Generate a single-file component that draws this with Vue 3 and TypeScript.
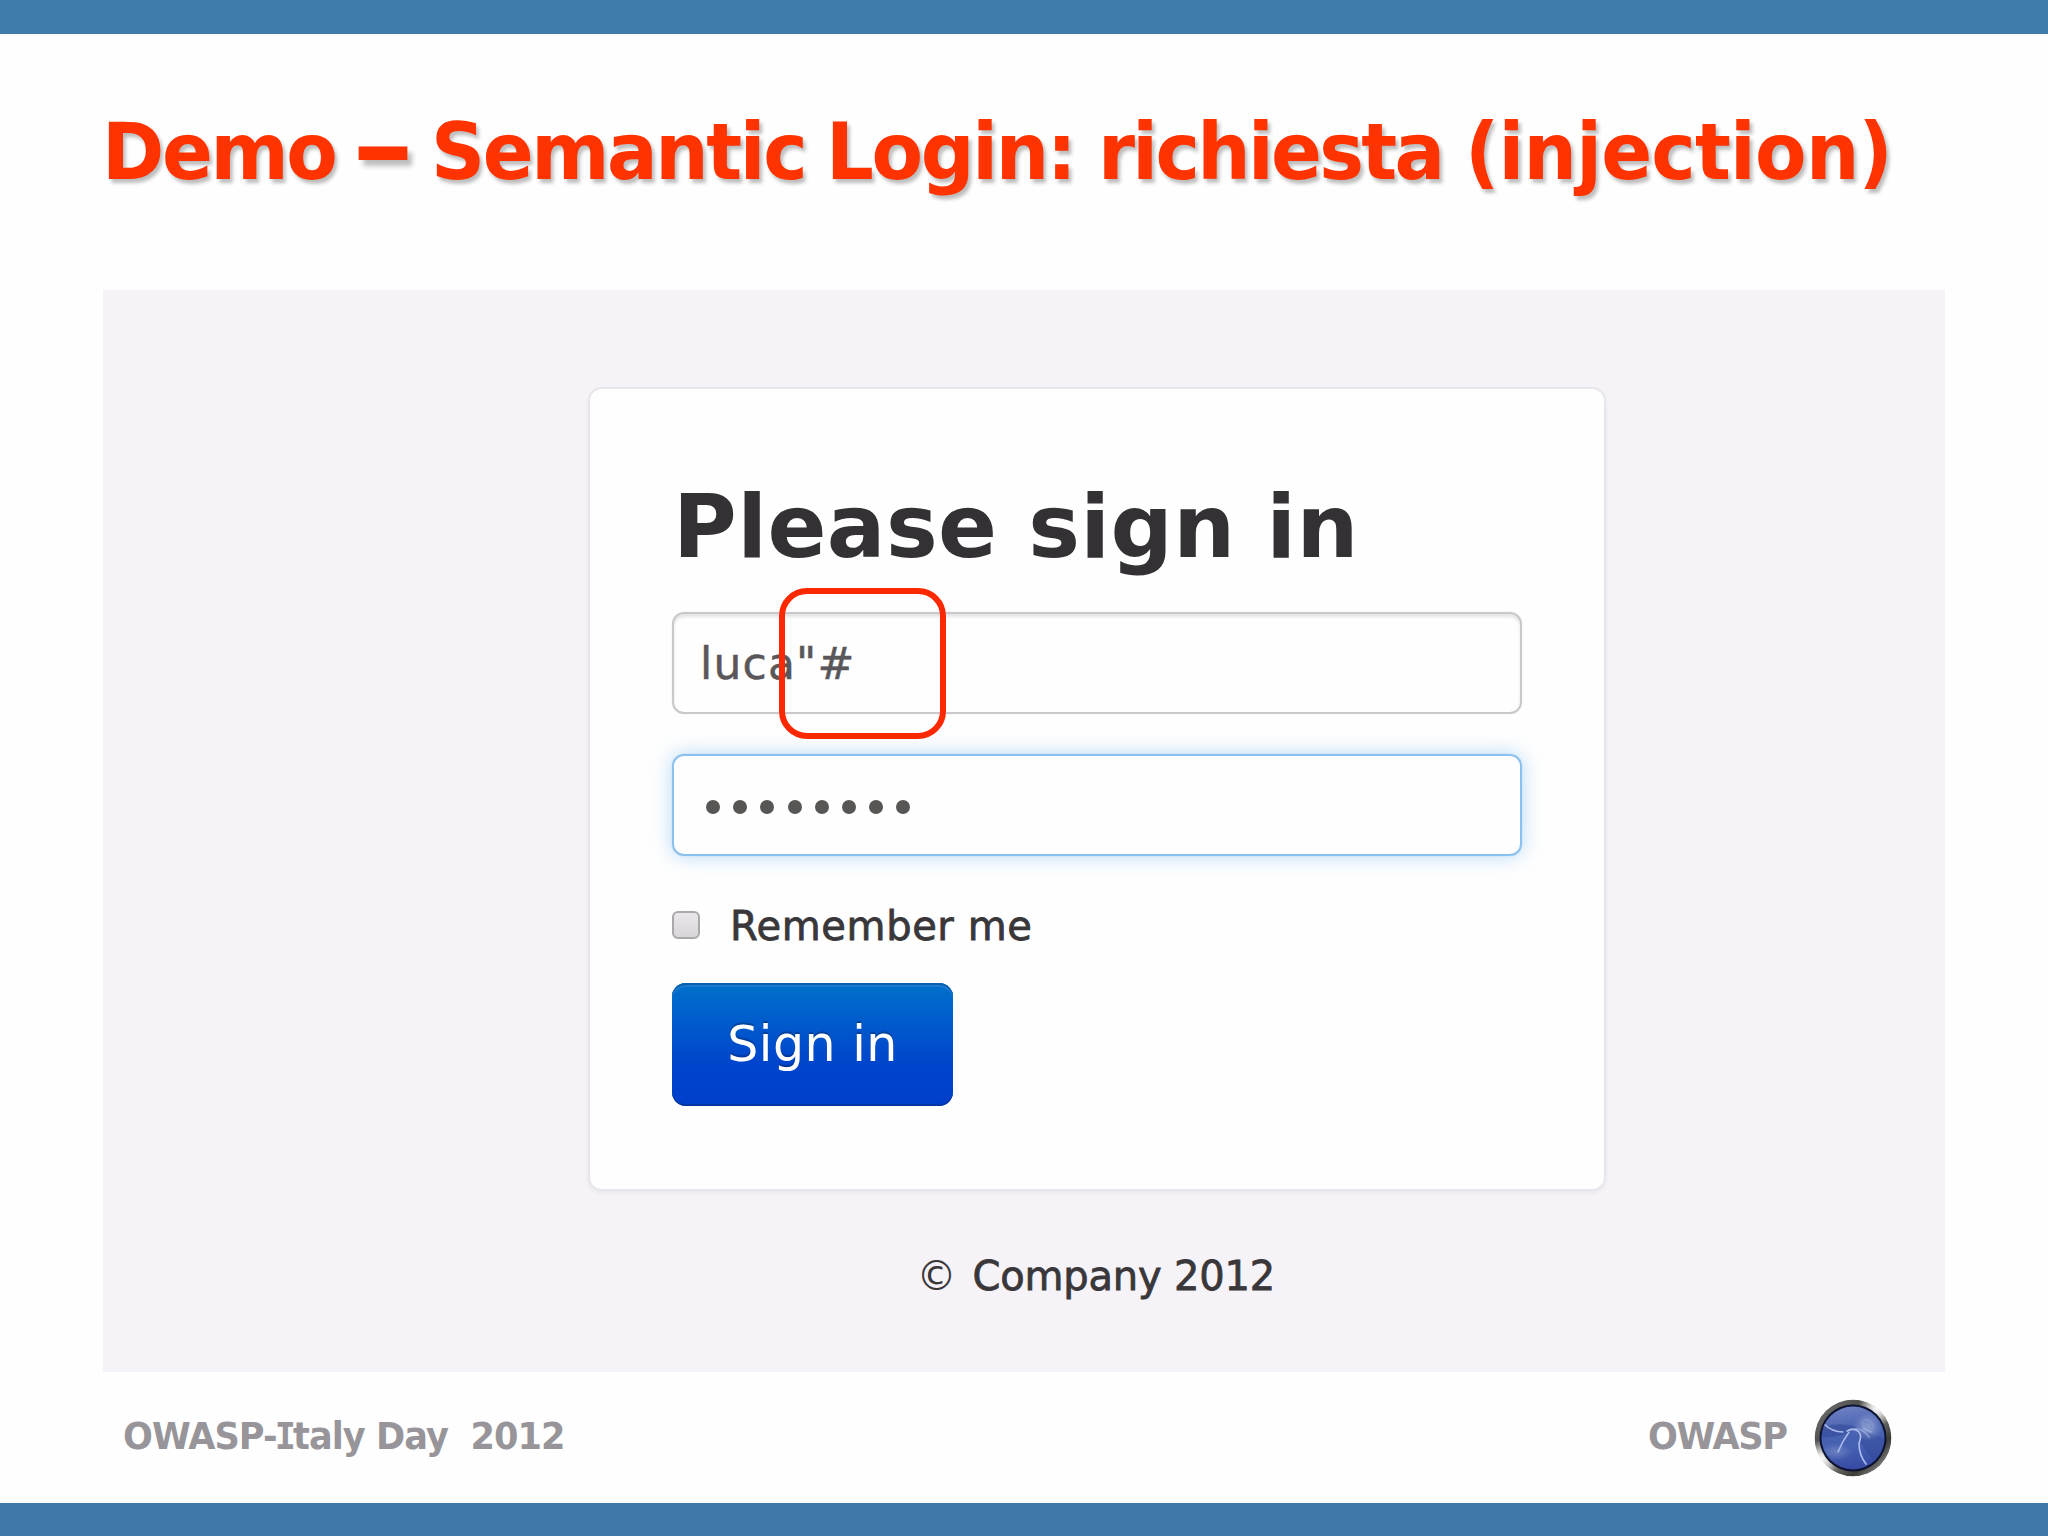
<script setup lang="ts">
import { ref } from 'vue'

interface TitleWord {
  text: string;
  width: number;
  spacing: number;
}

// word advances in px, including the space that follows
const titleWords: TitleWord[] = [
  { text: 'Demo', width: 250, spacing: -2.5 },
  { text: '–', width: 79, spacing: 0 },
  { text: 'Semantic', width: 395, spacing: -2.5 },
  { text: 'Login:', width: 272, spacing: -2.4 },
  { text: 'richiesta', width: 367, spacing: -2.8 },
  { text: '(injection)', width: 440, spacing: -0.8 },
];

const username = ref('luca"#');
const passwordLength = ref(8);
const remember = ref(false);
</script>

<template>
  <div class="slide">
    <header class="slide-header">
      <h1>
        <span
          v-for="word in titleWords"
          :key="word.text"
          :style="{ width: `${word.width}px`, letterSpacing: `${word.spacing}px` }"
        ><span class="word" :class="{ dash: word.text === '–' }">{{ word.text }}</span></span>
      </h1>
    </header>

    <main class="stage">
      <form class="card" @submit.prevent>
        <h2>Please sign in</h2>
        <div class="field">
          <input v-model="username" class="username" type="text" spellcheck="false" />
          <span class="highlight"></span>
        </div>
        <div class="field focused">
          <i v-for="n in passwordLength" :key="n" class="dot"></i>
        </div>
        <label class="remember">
          <input v-model="remember" type="checkbox" />
          <span>Remember me</span>
        </label>
        <button type="submit"><span>Sign in</span></button>
      </form>
      <p class="copyright"><span class="sign">©</span><span class="company">Company 2012</span></p>
    </main>

    <footer class="slide-footer">
      <span class="event">OWASP-<span class="slab">I</span>taly Day&nbsp; 2012</span>
      <span class="org">OWASP</span>
      <svg class="logo" viewBox="0 0 78 78">
        <defs>
          <linearGradient id="rim" x1="0.1" y1="0.1" x2="0.9" y2="0.9">
            <stop offset="0" stop-color="#6c6c6a" />
            <stop offset="0.25" stop-color="#50504e" />
            <stop offset="0.5" stop-color="#858582" />
            <stop offset="0.8" stop-color="#3c3c38" />
            <stop offset="1" stop-color="#888" />
          </linearGradient>
          <radialGradient id="shine">
            <stop offset="0" stop-color="#fff" />
            <stop offset="0.3" stop-color="#fff" stop-opacity="0.75" />
            <stop offset="1" stop-color="#fff" stop-opacity="0" />
          </radialGradient>
          <linearGradient id="globe" x1="0.4" y1="0" x2="0.55" y2="1">
            <stop offset="0" stop-color="#6d80c2" />
            <stop offset="0.35" stop-color="#4a63b2" />
            <stop offset="0.65" stop-color="#4560b2" />
            <stop offset="1" stop-color="#3549a2" />
          </linearGradient>
          <clipPath id="disc"><circle cx="39" cy="39" r="38.5" /></clipPath>
          <clipPath id="inner"><circle cx="39" cy="39" r="31.5" /></clipPath>
        </defs>
        <g clip-path="url(#disc)">
          <circle cx="39" cy="39" r="38.5" fill="url(#rim)" />
          <circle cx="63" cy="9" r="18" fill="url(#shine)" />
          <circle cx="7" cy="60" r="19" fill="url(#shine)" />
        </g>
        <circle cx="39" cy="39" r="33.5" fill="#0c1230" />
        <circle cx="39" cy="39" r="31.5" fill="url(#globe)" />
        <g clip-path="url(#inner)">
          <path d="M6 29 Q25 22 42 28 Q35 37 6 39Z" fill="#2c4390" opacity=".45" />
          <path d="M42 31 Q45 46 62 64 L72 40 Q60 35 42 31Z" fill="#304793" opacity=".4" />
          <ellipse cx="54" cy="28" rx="15" ry="14" fill="url(#shine)" opacity=".35" />
          <ellipse cx="22" cy="53" rx="17" ry="9" fill="url(#shine)" opacity=".2" />
          <g fill="none" stroke="#a9bbea" stroke-linecap="round">
            <path d="M10 25 Q18 33 29 33" stroke-width="1.6" />
            <path d="M24 53 Q28 43 35 33" stroke-width="1.5" />
            <path d="M33 32 Q40 28 45 33 Q48 37 45 44 Q45 56 52 65" stroke-width="1.7" />
            <path d="M36 31 L43 30 M44 30 Q51 32 55 38 M49 29 Q55 33 58 33" stroke-width="1.6" opacity=".6" />
            <path d="M48 24 Q51 18 56 22 Q62 26 57 31 Q51 33 48 24" stroke-width="1" opacity=".35" />
          </g>
        </g>
      </svg>
    </footer>
  </div>
</template>

<style>
body {
  margin: 0;
  background: #fefefe;
}
</style>

<style scoped>
.slide {
  box-sizing: border-box;
  display: flex;
  flex-direction: column;
  width: 2048px;
  height: 1536px;
  border-top: 34px solid #3f7cac;
  border-bottom: 33px solid #4178ac;
  background: #fefefe;
  font-family: 'DejaVu Sans', sans-serif;
  overflow: hidden;
}

.slide-header {
  box-sizing: border-box;
  height: 256px;
  padding: 68px 0 0 102px;
}

h1 {
  display: flex;
  margin: 0;
  color: #ff3300;
  font-size: 79px;
  font-weight: bold;
  line-height: 100px;
  white-space: nowrap;
  text-shadow: 3px 4px 4px rgba(0, 0, 0, 0.26);
}

.word {
  display: inline-block;
  transform: scaleX(0.95);
  transform-origin: 0 50%;
}

.dash {
  transform: translateY(-1.5px) scale(1.57, 1.35);
  transform-origin: 0 60%;
}

.stage {
  box-sizing: border-box;
  width: 1842px;
  height: 1082px;
  margin-left: 102.5px;
  padding: 97px 0 0 485.5px;
  background: #f5f3f7;
}

.card {
  box-sizing: border-box;
  display: flex;
  flex-direction: column;
  align-items: flex-start;
  width: 1018px;
  height: 804px;
  padding: 88px 82px 0;
  border: 2px solid #e8e6ea;
  border-radius: 14px;
  background: #fefefe;
  box-shadow: 0 2px 4px rgba(0, 0, 0, 0.05);
}

h2 {
  margin: 0 0 35px 1px;
  color: #343135;
  font-size: 87px;
  font-weight: bold;
  line-height: 100px;
  letter-spacing: 0.4px;
  white-space: nowrap;
}

.field {
  box-sizing: border-box;
  position: relative;
  display: flex;
  align-items: center;
  gap: 13.2px;
  width: 850px;
  height: 102px;
  margin-bottom: 40px;
  padding: 1px 0 0 26px;
  border: 2px solid #cbc8cd;
  border-radius: 12px;
  box-shadow: 0 0 1px #cfccd1, inset 0 3px 3px rgba(0, 0, 0, 0.1);
}

.username {
  width: 780px;
  height: 60px;
  padding: 0;
  border: 0;
  outline: 0;
  background: transparent;
  color: #59575a;
  font-family: inherit;
  font-size: 44px;
  letter-spacing: 1.2px;
  -webkit-text-stroke: 0.5px #59575a;
}

.focused {
  margin-bottom: 45px;
  padding: 3px 0 0 32px;
  border-color: #8bc1ee;
  box-shadow: 0 0 1px #8bc1ee, 0 0 20px rgba(82, 168, 236, 0.42);
}

.dot {
  width: 14px;
  height: 14px;
  border-radius: 50%;
  background: #575655;
}

/* callout drawn around the injected characters */
.highlight {
  box-sizing: border-box;
  position: absolute;
  left: 105px;
  top: -26px;
  width: 167px;
  height: 151px;
  border: 6px solid #fb2800;
  border-radius: 28px;
}

.remember {
  display: flex;
  align-items: center;
  gap: 30px;
  height: 50px;
  margin-bottom: 32px;
  color: #39373a;
  font-size: 40px;
  line-height: 50px;
  letter-spacing: 0.6px;
  -webkit-text-stroke: 0.8px #39373a;
}

.remember input {
  appearance: none;
  box-sizing: border-box;
  width: 28px;
  height: 28px;
  margin: 0 0 2px;
  border: 2px solid #aaa8ab;
  border-radius: 6px;
  background: linear-gradient(#e9e7ea, #d8d6d9);
}

button {
  width: 281px;
  height: 123px;
  padding: 0;
  border: 0;
  border-radius: 14px;
  background: linear-gradient(#0071cb, #0043cd 68%, #003fca);
  box-shadow: inset 0 2px 0 #0a5fae, inset 0 4px 0 #1b7ad0, inset 0 -2px 0 #0237a4;
  color: #fff;
  font-family: inherit;
  font-size: 49px;
  letter-spacing: 0.5px;
  text-shadow: 0 -2px 1px rgba(0, 0, 0, 0.25);
}

.copyright {
  display: flex;
  margin: 60px 0 0 328.5px;
  color: #39373a;
  font-size: 40px;
  line-height: 50px;
}

.sign {
  width: 56px;
}

.company {
  letter-spacing: -0.2px;
  -webkit-text-stroke: 0.8px #39373a;
}

.slide-footer {
  display: flex;
  align-items: flex-start;
  padding-left: 122.5px;
  color: #979599;
  font-size: 37px;
  font-weight: bold;
  line-height: 50px;
}

.event,
.org {
  margin-top: 40px;
  letter-spacing: -1px;
  transform: scaleX(0.95);
  transform-origin: 0 50%;
}

.event {
  width: 1525px;
}

.slab {
  margin: 0 -2px;
  font-family: 'DejaVu Sans Mono', monospace;
}

.org {
  width: 166.5px;
  letter-spacing: -1.4px;
}

.logo {
  width: 78px;
  height: 78px;
  margin-top: 27px;
}
</style>
